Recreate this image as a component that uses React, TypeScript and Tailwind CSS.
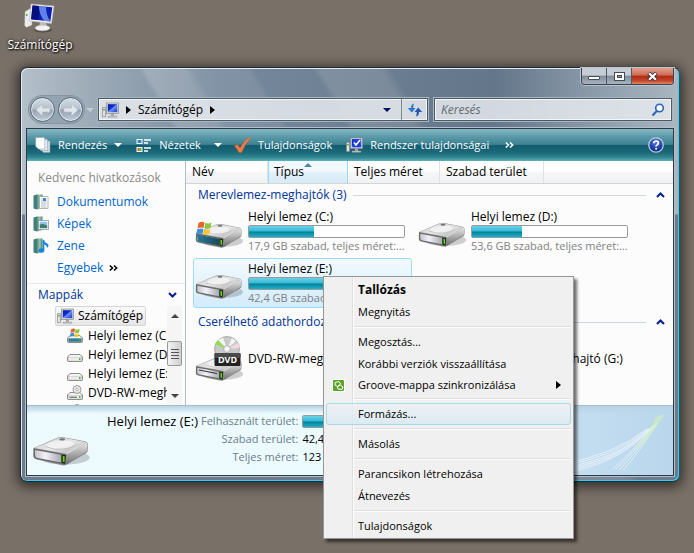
import React from "react";

const DriveBody = () => (
  <g>
    <ellipse cx="27" cy="18" rx="21" ry="6" fill="#000" opacity=".18" />
    <path d="M1 10 21 1.5Q23 .6 26 1L44 4.500Q46.500 5 46.500 7V12Q46.500 13.500 45 14.500L29 24Q27.500 25 25 24.500L3 19.500Q1 19 .8 17Z" fill="#8b8b8b" />
    <path d="M1.500 10 21 1.800Q23 1 26 1.400L45 5 28.500 15Z" fill="url(#driveTop)" />
    <path d="M11 9Q13 4 23 3.600T36 7Q31 11.500 22 11.800T11 9Z" fill="#fff" opacity=".5" />
    <path d="M11 9Q18 12 26 11T36 7" fill="none" stroke="#aaa" strokeWidth=".6" />
    <ellipse cx="25" cy="2.800" rx="2.500" ry="1" fill="#777" />
    <path d="M28.500 15 46 5.500V12.500L28.500 24Z" fill="url(#driveSide)" />
    <path d="M1 10.500 28.500 15.500 27.500 24.200 3 19Q1.300 18.500 1.200 17Z" fill="#666" />
    <path d="M2.200 11.800 24 15.800V22.300L3.500 18.200Q2.400 17.800 2.300 16.500Z" fill="url(#driveFront)" />
    <path d="M24.500 15.800 28 16 27.500 23.500 24.500 22.500Z" fill="#1c2b12" />
    <path d="M25.500 16.800 27 17V22L25.500 21.500Z" fill="#5ddc1c" />
    <path d="M28.500 15 45 5.300" stroke="#fff" strokeWidth=".8" opacity=".8" />
  </g>
);

const Defs = () => (
  <svg className="absolute size-0" aria-hidden="true">
    <defs>
      <linearGradient id="driveTop" x1="0" y1="0" x2="1" y2="1"><stop offset="0" stopColor="#c8c8c8" /><stop offset=".5" stopColor="#e6e6e6" /><stop offset="1" stopColor="#a8a8a8" /></linearGradient>
      <linearGradient id="driveSide" x1="0" y1="0" x2="0" y2="1"><stop offset="0" stopColor="#e8e8e8" /><stop offset="1" stopColor="#6d6d6d" /></linearGradient>
      <linearGradient id="driveFront" x1="0" y1="0" x2="1" y2="0"><stop offset="0" stopColor="#c5c5cb" /><stop offset=".4" stopColor="#f2f2f8" /><stop offset="1" stopColor="#a9a9b2" /></linearGradient>
      <linearGradient id="screenBlue" x1="0" y1="0" x2="1" y2="1"><stop offset="0" stopColor="#0a1a9a" /><stop offset=".45" stopColor="#1133d8" /><stop offset=".5" stopColor="#6f95f5" /><stop offset="1" stopColor="#1a35d0" /></linearGradient>
      <linearGradient id="winBlade" x1="0" y1="0" x2="1" y2="0"><stop offset="0" stopColor="#2a7896" /><stop offset="1" stopColor="#174a5c" /></linearGradient>
      <linearGradient id="bookGreen" x1="0" y1="0" x2="1" y2="0"><stop offset="0" stopColor="#4e8f86" /><stop offset=".5" stopColor="#9cc9ae" /><stop offset="1" stopColor="#3f8079" /></linearGradient>
      <radialGradient id="helpBall" cx=".5" cy=".3" r=".7"><stop offset="0" stopColor="#5f86dc" /><stop offset=".6" stopColor="#2145ae" /><stop offset="1" stopColor="#0d2a80" /></radialGradient>
    </defs>
  </svg>
);

const Flag = () => (
  <g>
    <path d="M2.500 2Q5.500 0 8.500 1.500L7.500 7Q4.500 5.800 1.500 7.500Z" fill="#e8622a" />
    <path d="M9.300 1.800Q12.500 3.200 15.500 1.500L14.500 7Q11.500 8.500 8.300 7.300Z" fill="#8cc63e" />
    <path d="M1.300 8.300Q4.500 6.700 7.400 7.900L6.400 13Q3.500 11.800.3 13.500Z" fill="#3f8fe0" />
    <path d="M8.200 8.200Q11 9.500 14.300 7.900L13.300 13Q10.500 14.500 7.200 13.300Z" fill="#fbc52f" />
  </g>
);

const Drive = ({ kind, className }: { kind?: string; className: string }) => {
  if (kind === "dvd")
    return (
      <svg viewBox="0 0 48 46" className={className} aria-hidden="true">
        <g transform="translate(0 20)"><DriveBody /><path d="M4 14 22 17.500" stroke="#333" strokeWidth="1.200" /></g>
        <circle cx="32" cy="13" r="12.500" fill="#c9c9c9" stroke="#999" strokeWidth=".7" />
        <path d="M32 13 20 8 23 4Z" fill="#8fe04a" />
        <path d="M32 13 23 4 28 1.500Z" fill="#f4f4f4" />
        <path d="M32 13 43 7 44.500 12Z" fill="#f3d7e3" />
        <path d="M32 13 37 2 41 5Z" fill="#fff" opacity=".8" />
        <circle cx="32" cy="13" r="3.500" fill="#e9e9e9" stroke="#999" strokeWidth=".6" />
        <circle cx="32" cy="13" r="1.400" fill="#fff" />
        <rect x="19.500" y="17" width="26" height="13" rx="1" fill="#222" />
        <rect x="19.500" y="17" width="26" height="5" rx="1" fill="#4a4a4a" />
        <text x="32.500" y="27" textAnchor="middle" fontSize="9" fontWeight="700" fill="#fff" fontFamily="Open Sans, sans-serif">DVD</text>
      </svg>
    );
  if (kind === "system")
    return (
      <svg viewBox="0 0 48 28" className={className} aria-hidden="true">
        <g transform="translate(0 2)"><DriveBody /><path d="M2 11.500 24 15.800V22.500L3 18.500Z" fill="url(#winBlade)" /></g>
        <g transform="translate(1 0)"><Flag /></g>
      </svg>
    );
  return <svg viewBox="0 0 48 26" className={className} aria-hidden="true"><DriveBody /></svg>;
};

const SmallDrive = ({ kind }: { kind?: string }) => (
  <svg viewBox="0 0 16 16" className="size-4 shrink-0" aria-hidden="true">
    <path d="M.5 10 3 7.500H13L15.500 10V13.500Q15.500 14.500 14.500 14.500H1.500Q.5 14.500.5 13.500Z" fill="#c4c4c4" stroke="#777" strokeWidth=".8" />
    <path d="M1.500 10 3.400 8H12.600L14.500 10Z" fill="#f4f4f4" />
    <rect x="1.500" y="10.500" width="13" height="3.300" rx=".5" fill={kind === "system" ? "#2c7f9c" : "#ececf0"} />
    <rect x="12" y="11.200" width="1.500" height="1.800" fill="#35b81a" />
    {kind === "system" && <g transform="translate(2.500 0) scale(.66)"><Flag /></g>}
    {kind === "dvd" && <g><circle cx="10" cy="4.500" r="4" fill="#e8e8e8" stroke="#888" strokeWidth=".8" /><circle cx="10" cy="4.500" r="1.200" fill="#fff" stroke="#888" strokeWidth=".6" /><path d="M2.500 12.200H10" stroke="#555" /></g>}
  </svg>
);

const BigComputer = () => (
  <svg viewBox="0 0 32 30" className="h-[30px] w-8" aria-hidden="true">
    <ellipse cx="19" cy="27" rx="9" ry="2.500" fill="#000" opacity=".3" />
    <path d="M1 8.500 8 4.500V22L2.500 24.500.5 22.500Z" fill="#ececec" stroke="#999" strokeWidth=".5" />
    <circle cx="2.700" cy="12" r="1" fill="#37c51d" />
    <path d="M16 19H22L23 24H15Z" fill="#bbb" />
    <ellipse cx="18.500" cy="25" rx="7.500" ry="2.800" fill="#f2f2f2" stroke="#bbb" strokeWidth=".5" />
    <path d="M7 1 30 3 27.500 20.500 5.500 18Z" fill="#eee" stroke="#b5b5b5" strokeWidth=".6" />
    <path d="M8.500 2.500 28.300 4.300 26.300 18.500 7.200 16.300Z" fill="#0b1fb4" />
    <path d="M8.500 2.500 15 3Q16 11 14 17L7.200 16.300Z" fill="#05107c" />
    <path d="M15 3 22 3.700Q22 12 26.300 18.500L20 17.800Q15 11 15 3Z" fill="#7fa4f5" opacity=".75" />
  </svg>
);

const SmallComputer = ({ check }: { check?: boolean }) => (
  <svg viewBox="0 0 17 16" className="h-4 w-[17px] shrink-0" aria-hidden="true">
    <path d="M.5 5.500H3.500V14.500H.5Z" fill="#e3e3e3" stroke="#888" strokeWidth=".7" />
    <rect x="1.200" y="7" width="1.500" height="1.500" fill="#28b81a" />
    <rect x="9" y="11" width="3" height="3" fill="#aaa" />
    <path d="M6 14H15V15.300H6Z" fill="#ccc" stroke="#888" strokeWidth=".4" />
    <rect x="4.500" y="1" width="12" height="10.500" fill="#ddd" stroke="#888" strokeWidth=".7" />
    <rect x="5.800" y="2.200" width="9.500" height="8" fill="url(#screenBlue)" />
    {check && <g><rect x="6.500" y="2.200" width="8" height="8" fill="#1c3ce0" /><path d="M8 5.500 10 8 14 3" fill="none" stroke="#fff" strokeWidth="1.600" /></g>}
  </svg>
);

const Book = ({ kind }: { kind: string }) => (
  <svg viewBox="0 0 16 16" className="size-4 shrink-0" aria-hidden="true">
    <path d="M.5 1.500 4 .5V15.500L.5 14.500Z" fill="#437f78" />
    <path d="M4 .5H9.500V14L4 15.500Z" fill="url(#bookGreen)" />
    {kind === "doc" && <g><path d="M6.500 2.500H15V14.500H6.500Z" fill="#fff" stroke="#999" strokeWidth=".7" /><path d="M8 5H9.500M8 7H13.500M8 9H13.500M8 11H13.500M8 13H13.500" stroke="#9aa" strokeWidth=".8" /><rect x="10" y="4" width="3" height="3" fill="#3f83d8" /></g>}
    {kind === "pic" && <g><path d="M5.500 4.500H15.500V13.500H5.500Z" fill="#fff" stroke="#888" strokeWidth=".7" /><path d="M6.700 5.700H14.300V9H6.700Z" fill="#8ac4f2" /><path d="M6.700 8.500Q10 7 14.300 9.500V12.300H6.700Z" fill="#3d8071" /></g>}
    {kind === "music" && <g><path d="M10.500 2V12" stroke="#1684dc" strokeWidth="1.600" /><ellipse cx="8.500" cy="12.500" rx="2.800" ry="2.200" fill="#1684dc" /><path d="M10.500 1.500Q11 4 14 5.500T14 10Q14 7 10.500 6Z" fill="#1684dc" /></g>}
  </svg>
);

const Down = ({ className = "" }: { className?: string }) => (
  <svg viewBox="0 0 8 4" className={`h-1 w-2 shrink-0 ${className}`} aria-hidden="true"><path d="M0 0H8L4 4Z" fill="currentColor" /></svg>
);
const Right = () => (
  <svg viewBox="0 0 5 8" className="h-2 w-[5px] shrink-0" aria-hidden="true"><path d="M0 0 5 4 0 8Z" fill="currentColor" /></svg>
);
const Raquo = () => (
  <svg viewBox="0 0 9 6" className="h-1.5 w-[9px] shrink-0" aria-hidden="true"><path d="M.8.500 3.500 3 .8 5.500M5 .5 7.700 3 5 5.500" fill="none" stroke="currentColor" strokeWidth="1.500" /></svg>
);
const Chevron = ({ up }: { up?: boolean }) => (
  <svg viewBox="0 0 9 6" className="h-1.5 w-[9px] shrink-0 text-[#00208c]" aria-hidden="true"><path d={up ? "M1 5 4.500 1.500 8 5" : "M1 1 4.500 4.500 8 1"} fill="none" stroke="currentColor" strokeWidth="2" /></svg>
);

const Capacity = ({ used }: { used: number }) => (
  <div className="h-[13px] w-full rounded-[2px] border border-[#9a9a9a] bg-white">
    <div style={{ width: `${used}%` }} className="h-full bg-[linear-gradient(#6fd0e2_0%,#2fb9da_48%,#067d96_52%,#18b2cc_100%)]" />
  </div>
);

function Tile({ name, free, used, kind, selected }: { name: string; free?: string; used?: number; kind?: string; selected?: boolean }) {
  return (
    <li className={`flex h-[50px] w-[219px] items-center gap-[5px] rounded-[3px] border pr-1.5 pl-px ${selected ? "border-[#99defd] bg-linear-to-b from-[#f3fafe] to-[#d2ebfb]" : "border-transparent"}`}>
      <Drive kind={kind} className={`w-12 shrink-0 ${free ? "mt-2" : ""}`} />
      <div className="min-w-0 flex-1">
        <div className="truncate leading-4">{name}</div>
        {free && (
          <>
            <Capacity used={used!} />
            <div className="truncate text-[11px] leading-4 text-[#808080]">{free}</div>
          </>
        )}
      </div>
    </li>
  );
}

const GroupHeader = ({ title }: { title: string }) => (
  <div className="flex h-5 items-center gap-1.5 pr-2 pl-3">
    <h2 className="whitespace-nowrap text-[#003399]">{title}</h2>
    <span className="h-px flex-1 bg-[#ccd6e4]" />
    <button aria-label={`${title} – összecsukás`} className="ml-1 flex"><Chevron up /></button>
  </div>
);

const tool = "flex items-center gap-[7px] whitespace-nowrap";

function Toolbar() {
  return (
    <div className="flex h-8 items-center bg-[linear-gradient(#87b7c2_0%,#5a99a8_25%,#3c8292_48%,#125b6f_52%,#1b6a79_75%,#358a95_90%,#62b3b8_100%)] pr-[9px] pl-2 text-[11px] text-white [text-shadow:1px_1px_2px_#063040]">
      <button className={`${tool} mr-3.5`}>
        <svg viewBox="0 0 16 16" className="size-4" aria-hidden="true">
          <path d="M6 4H15V15.500H8.500L6 13Z" fill="#cdd9e2" stroke="#8a9aa6" strokeWidth=".5" /><path d="M3.500 2.200H12.500V13.500H6L3.500 11.500Z" fill="#e2eaf0" stroke="#8a9aa6" strokeWidth=".5" /><path d="M.7.500H9.700V12H3.500L.7 9.500Z" fill="#fff" stroke="#8a9aa6" strokeWidth=".5" />
        </svg>
        Rendezés <Down />
      </button>
      <button className={`${tool} mr-3`}>
        <svg viewBox="0 0 16 15" className="h-[15px] w-4" aria-hidden="true">
          <path d="M.5 1H6.500V6H.5ZM.5 9H6.500V14H.5Z" fill="#fff" /><path d="M1.500 2H5.500V5H1.500Z" fill="#3b86c8" /><path d="M1.500 10H3.500V13H1.500Z" fill="#d5562c" /><path d="M3.500 10H5.500V13H3.500Z" fill="#5fae3a" /><path d="M8 2H15M8 5H12M8 10H15M8 13H12" stroke="#fff" strokeWidth="1.500" />
        </svg>
        Nézetek <Down className="ml-1.5" />
      </button>
      <button className={`${tool} mr-3.5 gap-1`}>
        <svg viewBox="0 0 17 16" className="h-4 w-[17px]" aria-hidden="true"><path d="M.5 9 3.500 7.500 6 11Q10 4 15 .5L16.500 1.500Q11 7 7.500 15.500H5Q3.500 12 .5 9Z" fill="#f47a45" stroke="#d85a28" strokeWidth=".5" /></svg>
        Tulajdonságok
      </button>
      <button className={`${tool} mr-4 gap-1`}><SmallComputer check />Rendszer tulajdonságai</button>
      <button aria-label="További parancsok"><Raquo /></button>
      <button aria-label="Súgó" className="ml-auto">
        <svg viewBox="0 0 16 16" className="size-4" aria-hidden="true"><circle cx="8" cy="8" r="7.200" fill="url(#helpBall)" stroke="#c3cbe0" strokeWidth="1.300" /><path d="M5.700 6.200Q5.800 4 8.100 4T10.400 6Q10.400 7.100 9.200 7.900T8.100 9.700" fill="none" stroke="#fff" strokeWidth="1.700" /><circle cx="8.100" cy="11.800" r="1" fill="#fff" /></svg>
      </button>
    </div>
  );
}

const tree = [
  { name: "Helyi lemez (C:)", kind: "system" },
  { name: "Helyi lemez (D:)" },
  { name: "Helyi lemez (E:)" },
  { name: "DVD-RW-meghajtó (F:)", kind: "dvd" },
  { name: "DVD-meghajtó (G:)", kind: "dvd" },
];

function Sidebar() {
  return (
    <aside className="w-[159px] shrink-0 border-r border-[#aebfcc] bg-[#fcfcfc]">
      <h2 className="pt-2 pl-[11px] leading-[18px] text-[#8a8a8a]">Kedvenc hivatkozások</h2>
      <nav className="pt-1 pb-1 pl-1.5 text-[#0066cc]">
        <a href="#dokumentumok" className="flex h-[22px] items-center gap-2"><Book kind="doc" />Dokumentumok</a>
        <a href="#kepek" className="flex h-[22px] items-center gap-2"><Book kind="pic" />Képek</a>
        <a href="#zene" className="flex h-[22px] items-center gap-2"><Book kind="music" />Zene</a>
        <button className="flex h-[22px] items-center gap-1.5 pl-6">Egyebek <span className="text-black"><Raquo /></span></button>
      </nav>
      <button className="flex h-[23px] w-full items-center justify-between border-t border-[#e6e9ec] pr-2 pl-[11px] text-[#003399]">Mappák <Chevron /></button>
      <div className="flex h-[99px] pr-[3px]">
        <ul className="min-w-0 flex-1 overflow-hidden whitespace-nowrap">
          <li className="ml-7 flex h-5 w-max items-center gap-1 rounded-[2px] border border-[#d5d5d5] bg-linear-to-b from-[#fafafa] to-[#e6e6e6] pr-0.5 pl-px"><SmallComputer />Számítógép</li>
          {tree.map((d) => <li key={d.name} className="flex h-[19px] items-center gap-[5px] pl-10"><SmallDrive kind={d.kind} />{d.name}</li>)}
        </ul>
        <div className="flex w-[15px] flex-col items-center bg-[#f5f5f5] text-[#444]">
          <button aria-label="Görgetés fel" className="flex h-[19px] items-center"><Down className="w-1.5 rotate-180" /></button>
          <button aria-label="Görgetősáv" className="mt-4 flex h-[25px] w-full flex-col items-center justify-center gap-0.5 rounded-[2px] border border-[#999] bg-linear-to-r from-[#f4f4f4] to-[#cfcfcf]">
            <span className="h-px w-2 bg-[#555]" /><span className="h-px w-2 bg-[#555]" /><span className="h-px w-2 bg-[#555]" /><span className="h-px w-2 bg-[#555]" />
          </button>
          <button aria-label="Görgetés le" className="mt-auto flex h-[19px] items-center"><Down className="w-1.5" /></button>
        </div>
      </div>
    </aside>
  );
}

const col = "h-full border-r border-[#e0e3e6] pl-1.5 text-left";

function Files() {
  return (
    <main className="min-w-0 flex-1 overflow-hidden bg-[#fcfcfc]">
      <div className="flex h-[23px] items-center border-b border-[#d5d5d5] bg-[linear-gradient(#fff_45%,#f4f5f6_55%,#f1f2f4)]">
        <button className={`${col} w-[82px]`}>Név</button>
        <button className="relative h-full w-20 border-x border-[#96d9f9] bg-[linear-gradient(#f2f9fd_45%,#e1f0f8_55%,#d8ecf6)] pl-[5px] text-left">
          Típus
          <span className="absolute inset-x-0 top-0.5 flex justify-center text-[#4e86a6]"><Down className="rotate-180" /></span>
        </button>
        <button className={`${col} w-[92px]`}>Teljes méret</button>
        <button className={`${col} w-[104px]`}>Szabad terület</button>
      </div>
      <section className="pt-px">
        <GroupHeader title="Merevlemez-meghajtók (3)" />
        <ul className="flex flex-wrap gap-x-1 gap-y-0.5 pt-px pl-[7px]">
          <Tile kind="system" name="Helyi lemez (C:)" used={42} free="17,9 GB szabad, teljes méret: 30,9 GB" />
          <Tile name="Helyi lemez (D:)" used={32} free="53,6 GB szabad, teljes méret: 78,1 GB" />
          <Tile name="Helyi lemez (E:)" used={66} free="42,4 GB szabad, teljes méret: 123 GB" selected />
        </ul>
      </section>
      <section className="pt-1">
        <GroupHeader title="Cserélhető adathordozós eszközök (2)" />
        <ul className="flex flex-wrap gap-x-1 pt-0.5 pl-[7px]">
          <Tile kind="dvd" name="DVD-RW-meghajtó (F:)" />
          <Tile kind="dvd" name="DVD+CD+RW-meghajtó (G:)" />
        </ul>
      </section>
    </main>
  );
}

function Details() {
  return (
    <footer className="relative flex h-[70px] border-t border-[#a5bccb] bg-[linear-gradient(#b9d3e4,transparent_8px),linear-gradient(90deg,#edfafe_0%,#ecfbff_45%,#d0e6f6_70%,#b9d6ec_100%)]">
      <Drive className="mt-[30px] ml-1 h-[31px] w-[60px]" />
      <svg viewBox="0 0 110 66" className="absolute right-0 bottom-0 h-[66px] w-[110px]" fill="none" aria-hidden="true">
        <g stroke="#fff" strokeWidth=".7" opacity=".8">
          <path d="M0 55Q50 46 84 20M0 57Q52 48 85 20M0 59Q54 50 86 20M0 61Q56 51 87 19M0 63Q58 52 88 19M0 65Q60 53 89 18" />
          <path d="M50 60Q70 42 91 16M53 60Q72 43 92 15M56 61Q74 43 93 15M60 61Q76 44 94 14" />
        </g>
        <path d="M70 42Q84 28 93 8L102 5Q88 28 73 41Z" fill="#cdeec0" opacity=".7" />
      </svg>
      <div className="flex pt-1.5 leading-[18px]">
        <div className="w-[106px] pl-4 text-[13px] whitespace-nowrap">Helyi lemez (E:)</div>
        <dl className="ml-1 grid grid-cols-[auto_110px] content-start gap-x-1 text-[11px] whitespace-nowrap">
          <dt className="text-right text-[#6b7c86]">Felhasznált terület:</dt>
          <dd className="flex items-center"><Capacity used={66} /></dd>
          <dt className="text-right text-[#6b7c86]">Szabad terület:</dt>
          <dd>42,4 GB</dd>
          <dt className="text-right text-[#6b7c86]">Teljes méret:</dt>
          <dd>123 GB</dd>
        </dl>
      </div>
    </footer>
  );
}

function NavButtons() {
  const circle = "flex size-[25px] items-center justify-center rounded-full border border-[#59697a] bg-[linear-gradient(#d5dde4_0%,#b4c0ca_48%,#93a1af_52%,#c3cfd8_100%)] shadow-[inset_0_0_0_1px_#dfe6ec]";
  return (
    <div className="-my-0.5 flex items-center">
      <div className="flex gap-[3px] rounded-full bg-[#8797a6]/60 p-px shadow-[0_0_0_1px_#8595a3]">
        <button aria-label="Vissza" className={circle}>
          <svg viewBox="0 0 16 14" className="w-4" aria-hidden="true"><path d="M7.500 1 1 7 7.500 13V9H15V5H7.500Z" fill="#dfe6eb" stroke="#b0bcc7" strokeWidth=".6" /></svg>
        </button>
        <button aria-label="Előre" className={circle}>
          <svg viewBox="0 0 16 14" className="w-4" aria-hidden="true"><path d="M8.500 1 15 7 8.500 13V9H1V5H8.500Z" fill="#dfe6eb" stroke="#b0bcc7" strokeWidth=".6" /></svg>
        </button>
      </div>
      <button aria-label="Előzmények" className="mr-1 ml-0.5 text-[#c4ced6]"><Down /></button>
    </div>
  );
}

function ExplorerWindow() {
  const box = "flex h-[23px] items-center border border-[#4c5a68] bg-[#e6eaee]/85 shadow-[0_0_0_1px_#a9b5c0,inset_0_0_0_1px_#f3f5f7]";
  return (
    <section aria-label="Számítógép" className="mr-3.5 ml-5 rounded-[7px] border border-[#1f2931] border-r-[#24566a] bg-[linear-gradient(59deg,transparent_312px,#ffffff2c_318px_352px,#ffffff14_360px_405px,transparent_412px_462px,#ffffff1c_468px_520px,transparent_530px),linear-gradient(transparent_0,transparent_146px,#6a7c8e_147px),linear-gradient(90deg,#b3bfc9_0%,#9ba9b6_12%,#778a9d_30%,#697b8e_60%,#64768a_72%,#93a2b0_90%,#aab6c0_100%)] px-[5px] pb-[5px] shadow-[inset_1px_1px_0_#e4ebf0,inset_-1px_-1px_0_#36cdf5,0_2px_12px_3px_#00000090]">
      <header className="flex h-[30px] items-start justify-end">
        <div className="flex h-[17px] overflow-hidden rounded-b-[4px] border border-t-0 border-[#39434d] shadow-[0_0_0_1px_#b9c4cd]">
          <button aria-label="Kis méret" className="flex w-[25px] items-center justify-center border-r border-[#4d5964] bg-[linear-gradient(#c5ccd3_45%,#7e8a97_50%,#a9b4be)]"><span className="mt-1 h-1 w-3 rounded-[1px] border border-[#444e58] bg-white" /></button>
          <button aria-label="Teljes méret" className="flex w-[25px] items-center justify-center border-r border-[#4d5964] bg-[linear-gradient(#c5ccd3_45%,#7e8a97_50%,#a9b4be)]"><span className="flex h-[9px] w-[11px] items-center justify-center border border-[#444e58] bg-white"><span className="h-[3px] w-[5px] border border-[#444e58] bg-[#8b96a1]" /></span></button>
          <button aria-label="Bezárás" className="flex w-[41px] items-center justify-center bg-[linear-gradient(#e0a090_0%,#cf6b55_45%,#b02912_50%,#c4472c_80%,#dc8a68)]">
            <svg viewBox="0 0 11 9" className="w-[11px]" aria-hidden="true"><path d="M1.500 1 9.500 8M9.500 1 1.500 8" stroke="#47303a" strokeWidth="4" /><path d="M2 1.300 9 7.700M9 1.300 2 7.700" stroke="#fff" strokeWidth="2.200" /></svg>
          </button>
        </div>
      </header>
      <div className="mb-[7px] flex items-center pr-0.5 pl-[3px]">
        <NavButtons />
        <div className={`${box} min-w-0 flex-1 gap-2`}>
          <span className="flex flex-1 items-center gap-[7px] pl-[3px]"><SmallComputer /><Right />Számítógép<Right /></span>
          <button aria-label="Legutóbbi helyek" className="px-0.5 text-[#00105c]"><Down /></button>
          <button aria-label="Frissítés" className="flex h-full w-[26px] items-center justify-center border-l border-[#7c8995]">
            <svg viewBox="0 0 16 14" className="w-4" aria-hidden="true"><path d="M7 .5Q4 1 4 5H.8L4.800 9.500 8.500 5H6.200Q6.200 2.500 7 .5Z" fill="#2c78c8" /><path d="M9 13.500Q12 13 12 9H15.200L11.200 4.500 7.500 9H9.800Q9.800 11.500 9 13.500Z" fill="#2459b0" /></svg>
          </button>
        </div>
        <label htmlFor="search" className="sr-only">Keresés</label>
        <div className={`${box} ml-1.5 w-[238px] pr-1.5 pl-1.5`}>
          <input id="search" type="search" placeholder="Keresés" className="min-w-0 flex-1 bg-transparent italic outline-none placeholder:text-[#65696e]" />
          <svg viewBox="0 0 14 14" className="size-3.5" fill="none" aria-hidden="true"><circle cx="8.500" cy="5" r="3.800" fill="#f5f8fc" stroke="#2b62b5" strokeWidth="1.600" /><path d="M5.800 8 1.500 12.500" stroke="#2b62b5" strokeWidth="2" /></svg>
        </div>
      </div>
      <div className="border border-[#2c3a46] shadow-[0_0_0_1px_#b2bec9]">
        <Toolbar />
        <div className="flex"><Sidebar /><Files /></div>
        <Details />
      </div>
    </section>
  );
}

const row = "flex h-[22px] w-full items-center rounded-[3px] border pl-[31px] text-left";
const Item = ({ children, bold, active }: { children: string; bold?: boolean; active?: boolean }) => (
  <li role="none"><button role="menuitem" className={`${row} ${bold ? "text-[12px] font-bold" : ""} ${active ? "border-[#a8d8eb] bg-linear-to-b from-[#ecf2f5]/70 to-[#d3e8f1]/70" : "border-transparent"}`}>{children}</button></li>
);
const Sep = () => <li role="separator" className="ml-7 flex h-2 items-center"><span className="h-0.5 w-full border-t border-[#dcdcdc] bg-white" /></li>;

function ContextMenu() {
  return (
    <ul role="menu" className="absolute top-[276px] left-[323px] w-[251px] border border-[#979797] bg-[linear-gradient(90deg,#f0f0f0_28px,#dedede_28px_29px,#fff_29px_30px,#f0f0f0_30px)] p-0.5 pb-px text-[11px] shadow-[3px_3px_3px_#00000090]">
      <Item bold>Tallózás</Item>
      <Item>Megnyitás</Item>
      <Sep />
      <Item>Megosztás...</Item>
      <Item>Korábbi verziók visszaállítása</Item>
      <li role="none">
        <button role="menuitem" className="flex h-5 w-full items-center pr-2.5 pl-1.5 text-left">
          <svg viewBox="0 0 13 13" className="mr-[13px] size-[13px]" aria-hidden="true"><rect width="13" height="13" fill="#fff" /><rect x="1" y="1" width="11" height="11" rx="1" fill="#5ba32b" /><path d="M3 3.500 7 2.500 8.500 5 5.500 7.500 3 6ZM5.500 7.500 6 10 10 10.500 11 8 8.500 6Z" fill="none" stroke="#fff" /></svg>
          <span className="flex-1">Groove-mappa szinkronizálása</span>
          <Right />
        </button>
      </li>
      <Sep />
      <Item active>Formázás...</Item>
      <Sep />
      <Item>Másolás</Item>
      <Sep />
      <Item>Parancsikon létrehozása</Item>
      <Item>Átnevezés</Item>
      <Sep />
      <Item>Tulajdonságok</Item>
    </ul>
  );
}

export default function App() {
  return (
    <div className="relative min-h-screen overflow-hidden bg-[#797067] font-['Open_Sans','Noto_Sans',sans-serif] text-[12px] leading-4 text-black">
      <Defs />
      <div className="flex h-[67px] pt-[3px]">
        <button className="flex w-20 flex-col items-center gap-1 text-white [text-shadow:1px_1px_2px_#000,0_0_3px_#000]"><BigComputer />Számítógép</button>
      </div>
      <ExplorerWindow />
      <ContextMenu />
    </div>
  );
}
